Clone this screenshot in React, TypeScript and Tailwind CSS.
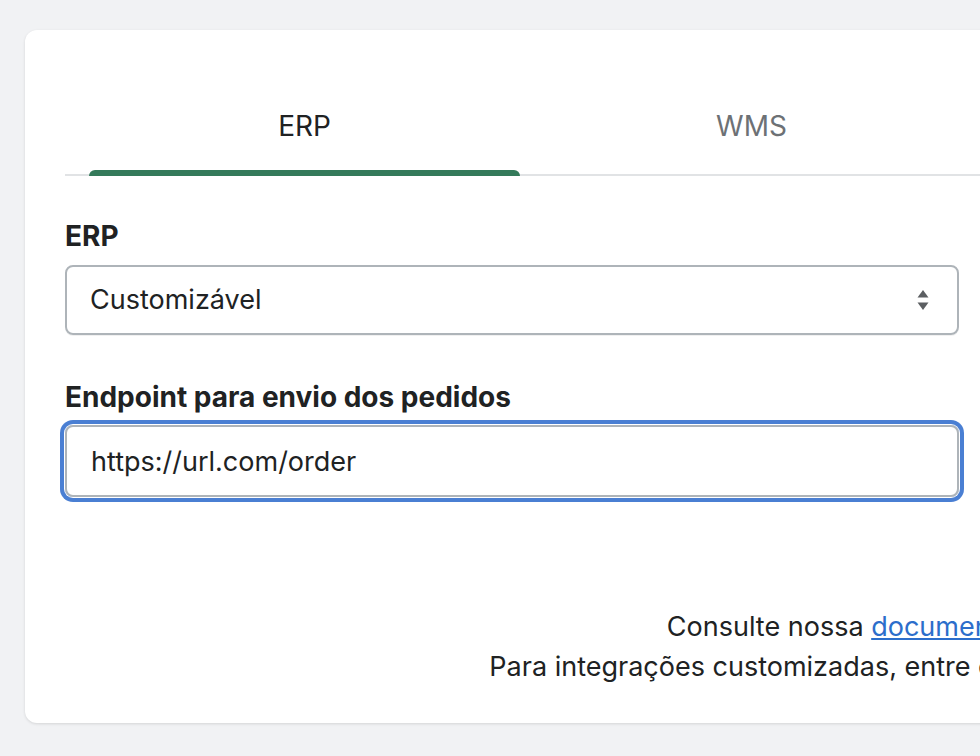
import { useState } from 'react';

const TABS = ['ERP', 'WMS'];

function SelectArrows() {
  return (
    <svg width="12" height="22" viewBox="0 0 12 22" className="text-[#5c5f62]">
      <path d="M6 1 L11.5 8.5 H0.5 Z" fill="currentColor" strokeLinejoin="round" />
      <path d="M6 21 L11.5 13.5 H0.5 Z" fill="currentColor" strokeLinejoin="round" />
    </svg>
  );
}

export default function App() {
  const [tab, setTab] = useState('ERP');
  const [endpoint, setEndpoint] = useState('https://url.com/order');

  return (
    <div
      className="h-screen w-screen overflow-hidden bg-[#f1f2f4] pl-[25px] pt-[30px] text-[#202223]"
      style={{ fontFamily: 'Inter, "Liberation Sans", sans-serif' }}
    >
      <div className="w-[2025px] h-[693px] bg-white rounded-xl shadow-[0_1px_3px_rgba(0,0,0,0.12)] px-10 pt-10">
        {/* Tabs */}
        <div className="flex gap-4 px-6 border-b-2 border-[#e1e3e5]">
          {TABS.map(t => (
            <button
              key={t}
              onClick={() => setTab(t)}
              className={`relative w-[431px] h-[104px] pt-[7px] flex items-center justify-center text-[28px] ${
                tab === t ? 'text-[#202223]' : 'text-[#6d7175]'
              }`}
            >
              {t}
              {tab === t && (
                <span className="absolute left-0 right-0 bottom-[-2px] h-[6px] rounded-t-md bg-[#347a5a]" />
              )}
            </button>
          ))}
        </div>

        {/* Form */}
        <div className="w-[894px] pt-[44px]">
          <label className="block text-[28px] leading-8 font-bold">ERP</label>
          <div className="mt-[13px] relative h-[70px] border-2 border-[#aeb4b9] rounded-lg shadow-[0_1px_0_rgba(0,0,0,0.06)] flex items-center pl-[23px] pr-[28px]">
            <span className="text-[27px] flex-1">Customizável</span>
            <SelectArrows />
          </div>

          <label className="block mt-[46px] text-[28px] leading-8 font-bold">Endpoint para envio dos pedidos</label>
          <input
            value={endpoint}
            onChange={e => setEndpoint(e.target.value)}
            className="mt-[12px] block w-full h-[72px] border-2 border-[#aeb4b9] rounded-lg pl-[24px] text-[27px] outline-none shadow-[0_0_0_1px_#ffffff,0_0_0_5px_#4a7fd3]"
          />
        </div>

        {/* Footer */}
        <div className="mt-[110px] text-center text-[27px] leading-10">
          <p>
            Consulte nossa <a href="#" className="text-[#2c6ecb] underline">documentação da API</a> para mais detalhes.
          </p>
          <p>Para integrações customizadas, entre em contato com nosso time de suporte técnico.</p>
        </div>
      </div>
    </div>
  );
}
